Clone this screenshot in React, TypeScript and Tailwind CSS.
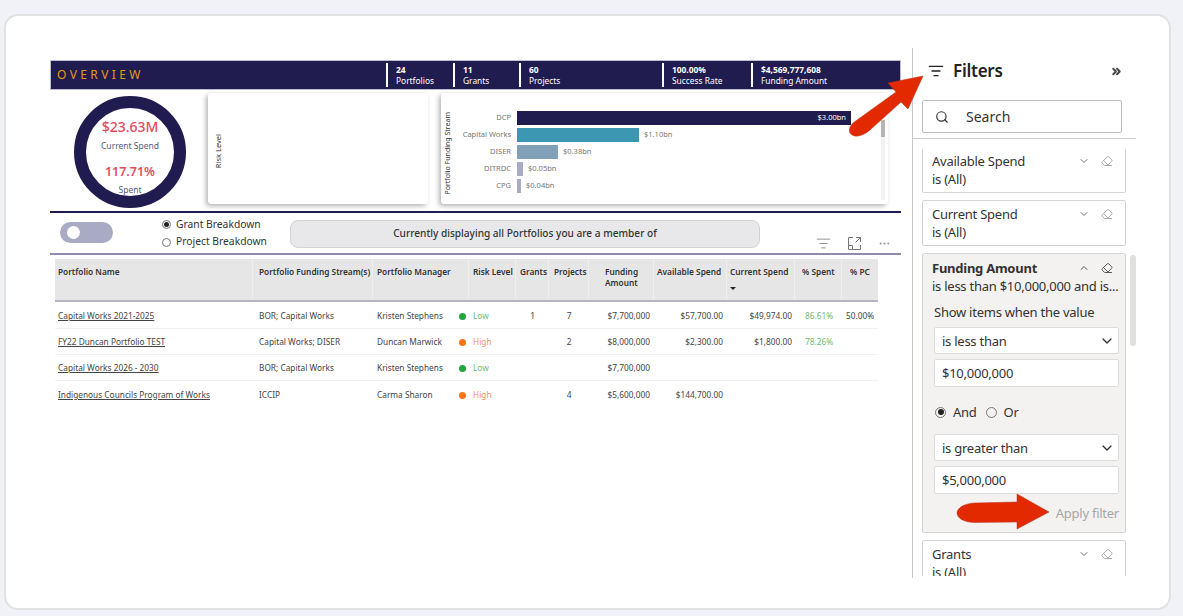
import { ChevronDown, ChevronUp, ChevronsRight, Ellipsis, Eraser, ListFilter, Search } from 'lucide-react'

const stats = [
  { value: '24', label: 'Portfolios', width: 'w-[67px]' },
  { value: '11', label: 'Grants', width: 'w-[66px]' },
  { value: '60', label: 'Projects', width: 'w-[143px]' },
  { value: '100.00%', label: 'Success Rate', width: 'w-[89px]' },
  { value: '$4,569,777,608', label: 'Funding Amount', width: 'w-[149px]' },
]

const bars = [
  { name: 'DCP', value: '$3.00bn', width: 'w-[334px]', color: 'bg-[#211c4f]', inside: true },
  { name: 'Capital Works', value: '$1.10bn', width: 'w-[122px]', color: 'bg-[#3b97b2]' },
  { name: 'DISER', value: '$0.38bn', width: 'w-[41px]', color: 'bg-[#7fa0b7]' },
  { name: 'DITRDC', value: '$0.05bn', width: 'w-[6px]', color: 'bg-[#a9aac3]' },
  { name: 'CPG', value: '$0.04bn', width: 'w-[4px]', color: 'bg-[#a9aac3]' },
]

const rows = [
  {
    name: 'Capital Works 2021-2025',
    stream: 'BOR; Capital Works',
    manager: 'Kristen Stephens',
    risk: 'Low',
    grants: '1',
    projects: '7',
    funding: '$7,700,000',
    available: '$57,700.00',
    current: '$49,974.00',
    spent: '86.61%',
    pc: '50.00%',
    height: 'h-[27px]',
  },
  {
    name: 'FY22 Duncan Portfolio TEST',
    stream: 'Capital Works; DISER',
    manager: 'Duncan Marwick',
    risk: 'High',
    grants: '',
    projects: '2',
    funding: '$8,000,000',
    available: '$2,300.00',
    current: '$1,800.00',
    spent: '78.26%',
    pc: '',
    height: 'h-[26px]',
  },
  {
    name: 'Capital Works 2026 - 2030',
    stream: 'BOR; Capital Works',
    manager: 'Kristen Stephens',
    risk: 'Low',
    grants: '',
    projects: '',
    funding: '$7,700,000',
    available: '',
    current: '',
    spent: '',
    pc: '',
    height: 'h-[26px]',
  },
  {
    name: 'Indigenous Councils Program of Works',
    stream: 'ICCIP',
    manager: 'Carma Sharon',
    risk: 'High',
    grants: '',
    projects: '4',
    funding: '$5,600,000',
    available: '$144,700.00',
    current: '',
    spent: '',
    pc: '',
    height: 'h-[26px]',
  },
]

const tableCols = 'grid grid-cols-[198px_120px_96px_47px_33px_40px_65px_73px_68px_47px_36px]'

const FilterCard = ({ name, extra }: { name: string; extra?: string }) => (
  <div className={`h-[46px] shrink-0 rounded-[2px] border border-[#d4d4d4] bg-white pl-[9px] pr-[12px] pt-[4px] text-[13px] leading-[18px] text-[#333] ${extra ?? ''}`}>
    <div className="flex items-center justify-between">
      <span>{name}</span>
      <div className="flex items-center gap-[11px] text-[#777]">
        <ChevronDown size={12} />
        <Eraser size={12} className="text-[#aaa]" />
      </div>
    </div>
    <div>is (All)</div>
  </div>
)

const Select = ({ label, extra }: { label: string; extra?: string }) => (
  <div className={`flex h-[27px] items-center justify-between rounded-[2px] border border-[#dcdcdc] bg-white pl-[7px] pr-[3px] text-[13px] text-[#333] ${extra ?? ''}`}>
    <span>{label}</span>
    <ChevronDown size={16} />
  </div>
)

const Input = ({ value, extra }: { value: string; extra?: string }) => (
  <div className={`flex h-[28px] items-center rounded-[2px] border border-[#dcdcdc] bg-white pl-[7px] text-[13px] text-[#333] ${extra ?? ''}`}>
    {value}
  </div>
)

export default function App() {
  return (
    <div className="relative h-[616px] w-[1183px] overflow-hidden bg-[#f1f2f8] pl-[4px] pt-[14px] font-['Noto_Sans',sans-serif]">
      <div className="flex h-[596px] w-[1167px] rounded-[14px] border-2 border-[#e2e2e2] bg-white">
        {/* report */}
        <div className="ml-[44px] w-[851px] shrink-0 pt-[44px]">
          <div className="flex h-[30px] items-center border border-[#bcbbd0] bg-[#211c4f] text-white">
            <div className="flex-1 pl-[6px] text-[12px] tracking-[3.4px] text-[#e39a12]">OVERVIEW</div>
            {stats.map((s) => (
              <div key={s.label} className={`flex h-[24px] items-center border-l-2 border-white pl-[8px] ${s.width}`}>
                <div className="text-[8.4px] leading-[11px]">
                  <div className="font-bold">{s.value}</div>
                  <div>{s.label}</div>
                </div>
              </div>
            ))}
          </div>

          <div className="flex h-[121px]">
            <div className="w-[158px] shrink-0 pl-[24px] pt-[6px]">
              <div className="flex h-[112px] w-[112px] flex-col items-center rounded-full border-[12px] border-[#211c4f] text-center">
                <div className="mt-[10px] text-[14px] font-medium leading-[18px] text-[#e8495c]">$23.63M</div>
                <div className="mt-[4px] text-[8.5px] leading-[12px] text-[#555a78]">Current Spend</div>
                <div className="mt-[12px] text-[12.5px] font-semibold leading-[16px] text-[#e8495c]">117.71%</div>
                <div className="mt-[4px] text-[8.5px] leading-[12px] text-[#555a78]">Spent</div>
              </div>
            </div>
            <div className="mt-[3px] flex h-[111px] w-[220px] items-center rounded-[3px] bg-white pl-[5px] pt-[6px] shadow-[-2px_2px_5px_rgba(0,0,0,0.3)]">
              <span className="rotate-180 text-[7.5px] text-[#333] [writing-mode:vertical-rl]">Risk Level</span>
            </div>
            <div className="ml-[13px] mt-[3px] flex h-[111px] w-[447px] rounded-[3px] bg-white shadow-[-2px_2px_5px_rgba(0,0,0,0.3)]">
              <div className="flex w-[15px] shrink-0 items-center justify-center pt-[10px]">
                <span className="rotate-180 whitespace-nowrap text-[7px] text-[#333] [writing-mode:vertical-rl]">Portfolio Funding Stream</span>
              </div>
              <div className="flex w-[425px] flex-col gap-[3px] pt-[18px]">
                {bars.map((b) => (
                  <div key={b.name} className="flex h-[14px] items-center text-[7.5px] text-[#777]">
                    <div className="w-[61px] whitespace-nowrap pr-[6px] text-right">{b.name}</div>
                    <div className={`flex h-full items-center justify-end ${b.width} ${b.color}`}>
                      {b.inside && <span className="pr-[5px] text-white">{b.value}</span>}
                    </div>
                    {!b.inside && <span className="pl-[5px]">{b.value}</span>}
                  </div>
                ))}
              </div>
              <div className="mt-[17px] h-[90px] w-[4px] shrink-0 bg-[#f2f2f2]">
                <div className="mt-[10px] h-[17px] w-[4px] bg-[#b5b5b5]" />
              </div>
            </div>
          </div>

          <div className="h-[2px] bg-[#211c4f]" />

          <div className="flex h-[40px]">
            <div className="w-[112px] shrink-0 pl-[10px] pt-[9px]">
              <div className="flex h-[21px] w-[53px] items-center rounded-full bg-[#a9aac3] pl-[7px]">
                <div className="h-[13px] w-[13px] rounded-full bg-white" />
              </div>
            </div>
            <div className="w-[128px] shrink-0 pt-[2px] text-[10.3px] text-[#333]">
              <div className="flex h-[18px] items-center gap-[5px] pt-[1px]">
                <div className="flex h-[9px] w-[9px] items-center justify-center rounded-full border border-[#777]">
                  <div className="h-[5px] w-[5px] rounded-full bg-[#222]" />
                </div>
                Grant Breakdown
              </div>
              <div className="flex h-[18px] items-center gap-[5px]">
                <div className="h-[9px] w-[9px] rounded-full border border-[#777]" />
                Project Breakdown
              </div>
            </div>
            <div className="mt-[7px] flex h-[28px] w-[470px] items-center justify-center rounded-[8px] border border-[#d2d2d6] bg-[#e8e8eb] text-[10.1px] font-medium text-[#333]">
              Currently displaying all Portfolios you are a member of
            </div>
            <div className="ml-[56px] mt-[20px] flex items-center gap-[16px] text-[#777]">
              <ListFilter size={15} strokeWidth={1.25} />
              <svg width="15" height="15" viewBox="0 0 15 15" fill="none" stroke="currentColor" strokeWidth="1">
                <path d="M6 1.500H1.500V13.500H13.500V9M9 1.500H13.500V6M13.500 1.500L8.500 6.500M1.500 9.500H5.500V13.500" />
              </svg>
              <Ellipsis size={13} className="text-[#999]" />
            </div>
          </div>

          <div className="h-[2px] bg-[#8f8cab]" />

          <div className="ml-[5px] mt-[4px] w-[823px]">
            <div className={`${tableCols} h-[43px] border-b-2 border-[#b5b3c4] bg-[#e6e6e6] text-[8.3px] font-semibold leading-[11px] text-[#333]`}>
              <div className="border-r border-[#eee] pl-[3px] pt-[7px]">Portfolio Name</div>
              <div className="whitespace-nowrap border-r border-[#eee] pl-[6px] pt-[7px]">Portfolio Funding Stream(s)</div>
              <div className="border-r border-[#eee] pl-[4px] pt-[7px]">Portfolio Manager</div>
              <div className="whitespace-nowrap border-r border-[#eee] pl-[4px] pt-[7px]">Risk Level</div>
              <div className="border-r border-[#eee] pl-[4px] pt-[7px]">Grants</div>
              <div className="border-r border-[#eee] pl-[5px] pt-[7px]">Projects</div>
              <div className="border-r border-[#eee] pl-[16px] pt-[7px]">Funding Amount</div>
              <div className="whitespace-nowrap border-r border-[#eee] pl-[3px] pt-[7px]">Available Spend</div>
              <div className="whitespace-nowrap border-r border-[#eee] pl-[3px] pt-[7px]">
                Current Spend
                <div className="mt-[10px] h-0 w-0 border-x-[3px] border-t-[3px] border-x-transparent border-t-[#222]" />
              </div>
              <div className="border-r border-[#eee] pl-[7px] pt-[7px]">% Spent</div>
              <div className="pl-[8px] pt-[7px]">% PC</div>
            </div>
            {rows.map((r) => (
              <div key={r.name} className={`${tableCols} ${r.height} items-center border-b border-[#f2f2f2] pt-[2px] text-[8.3px] text-[#444] last:border-b-0`}>
                <div className="whitespace-nowrap pl-[3px] underline">{r.name}</div>
                <div className="pl-[6px]">{r.stream}</div>
                <div className="pl-[4px]">{r.manager}</div>
                <div className={`flex items-center pl-[4px] ${r.risk === 'Low' ? 'text-[#6dbb7c]' : 'text-[#f58f5e]'}`}>
                  <span className={`-ml-[14px] mr-[7px] h-[7px] w-[7px] shrink-0 rounded-full ${r.risk === 'Low' ? 'bg-[#22a63c]' : 'bg-[#fa7314]'}`} />
                  {r.risk}
                </div>
                <div className="text-center">{r.grants}</div>
                <div className="text-center">{r.projects}</div>
                <div className="pr-[4px] text-right">{r.funding}</div>
                <div className="pr-[4px] text-right">{r.available}</div>
                <div className="pr-[3px] text-right">{r.current}</div>
                <div className="pl-[10px] text-[#6dbb7c]">{r.spent}</div>
                <div className="pl-[4px]">{r.pc}</div>
              </div>
            ))}
          </div>
        </div>

        {/* filter pane */}
        <div className="ml-[11px] mt-[32px] h-[530px] w-[224px] shrink-0 border-l border-[#c8c8c8] tracking-[-0.25px]">
          <div className="flex h-[52px] items-center justify-between pb-[6px] pl-[15px] pr-[13px]">
            <div className="flex items-center gap-[9px] text-[#222]">
              <ListFilter size={16} strokeWidth={2} />
              <span className="text-[17px] font-semibold">Filters</span>
            </div>
            <ChevronsRight size={13} strokeWidth={3.5} className="text-[#444]" />
          </div>
          <div className="ml-[9px] flex h-[33px] w-[200px] items-center gap-[17px] rounded-[2px] border border-[#bdbdbd] pl-[12px] text-[14px] tracking-normal text-[#333]">
            <Search size={14} />
            Search
          </div>
          <div className="mt-[5px] h-[1px] bg-[#d0d0d0]" />

          <div className="relative mt-[10px] flex h-[427px] flex-col gap-[7px] overflow-hidden pl-[9px] pr-[10px]">
            <FilterCard name="Available Spend" extra="-mt-[2px]" />
            <FilterCard name="Current Spend" />
            <div className="h-[280px] shrink-0 rounded-[2px] border border-[#d4d4d4] bg-[#f3f2f1] pl-[9px] pr-[6px] pt-[5px] text-[13px] leading-[18px] text-[#333]">
              <div className="flex items-center justify-between pr-[6px]">
                <span className="font-bold">Funding Amount</span>
                <div className="flex items-center gap-[11px] text-[#555]">
                  <ChevronUp size={12} />
                  <Eraser size={12} />
                </div>
              </div>
              <div className="whitespace-nowrap">is less than $10,000,000 and is...</div>
              <div className="ml-[2px] mt-[8px]">Show items when the value</div>
              <div className="ml-[2px] mt-[6px]">
                <Select label="is less than" />
                <Input value="$10,000,000" extra="mt-[5px]" />
                <div className="flex h-[47px] items-center pl-[1px] pt-[3px]">
                  <div className="flex h-[11px] w-[11px] items-center justify-center rounded-full border border-[#777]">
                    <div className="h-[6px] w-[6px] rounded-full bg-[#222]" />
                  </div>
                  <span className="ml-[7px]">And</span>
                  <div className="ml-[9px] h-[11px] w-[11px] rounded-full border border-[#777]" />
                  <span className="ml-[7px]">Or</span>
                </div>
                <Select label="is greater than" />
                <Input value="$5,000,000" extra="mt-[5px]" />
              </div>
              <div className="mt-[10px] text-right text-[#a6a6a6]">Apply filter</div>
            </div>
            <FilterCard name="Grants" />
            <div className="absolute right-0 top-[106px] h-[91px] w-[6px] rounded-full bg-[#e0e0e0]" />
          </div>
        </div>
      </div>

      {/* callout arrows */}
      <svg className="pointer-events-none absolute left-0 top-0" width="1183" height="616" viewBox="0 0 1183 616">
        <path
          d="M923 76L908 109L901 102L870 130C862 137 853 138 850 133C848 128 851 124 857 120L896 92L888 83Z"
          fill="#e32900"
          stroke="#b9341c"
          strokeWidth="0.5"
        />
        <path
          d="M1049 512L1017 529L1017 522L975 522.500C964 522.500 957 518 957 513C957 508 964 503.500 975 503L1017 502L1017 494Z"
          fill="#e32900"
          stroke="#b9341c"
          strokeWidth="0.5"
        />
      </svg>
    </div>
  )
}
